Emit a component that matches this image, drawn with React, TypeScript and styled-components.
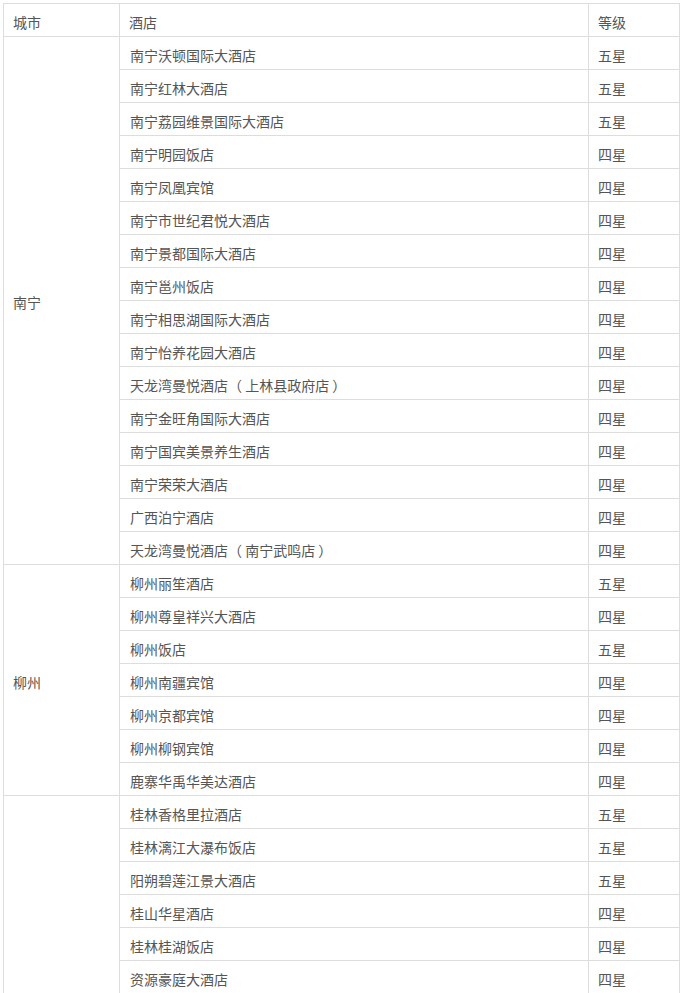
import styled, { createGlobalStyle } from "styled-components";

const GlobalStyle = createGlobalStyle`
  body {
    margin: 0;
    padding: 3px 4px 0 3px;
    background: #ffffff;
    font-family: "Noto Sans CJK SC", "Noto Sans", sans-serif;
  }
`;

const Table = styled.table`
  width: 677px;
  border-collapse: collapse;
  table-layout: fixed;
  font-size: 14px;
  color: #555555;
`;

const Cell = styled.td<{ $width?: number }>`
  border: 1px solid #dddddd;
  height: 33px;
  padding: 3px 10px 0 9px;
  box-sizing: border-box;
  vertical-align: middle;
  line-height: 20px;
  white-space: nowrap;
  ${(p) => (p.$width ? `width: ${p.$width}px;` : "")}
`;

const HeadCell = styled(Cell).attrs({ as: "th" })`
  font-weight: normal;
  text-align: left;
`;

const HotelCell = styled(Cell)`
  padding-left: 10px;
`;

type Group = { city: string; hotels: [string, string][] };

const groups: Group[] = [
  {
    city: "南宁",
    hotels: [
      ["南宁沃顿国际大酒店", "五星"],
      ["南宁红林大酒店", "五星"],
      ["南宁荔园维景国际大酒店", "五星"],
      ["南宁明园饭店", "四星"],
      ["南宁凤凰宾馆", "四星"],
      ["南宁市世纪君悦大酒店", "四星"],
      ["南宁景都国际大酒店", "四星"],
      ["南宁邕州饭店", "四星"],
      ["南宁相思湖国际大酒店", "四星"],
      ["南宁怡养花园大酒店", "四星"],
      ["天龙湾曼悦酒店（ 上林县政府店 ）", "四星"],
      ["南宁金旺角国际大酒店", "四星"],
      ["南宁国宾美景养生酒店", "四星"],
      ["南宁荣荣大酒店", "四星"],
      ["广西泊宁酒店", "四星"],
      ["天龙湾曼悦酒店（ 南宁武鸣店 ）", "四星"],
    ],
  },
  {
    city: "柳州",
    hotels: [
      ["柳州丽笙酒店", "五星"],
      ["柳州尊皇祥兴大酒店", "四星"],
      ["柳州饭店", "五星"],
      ["柳州南疆宾馆", "四星"],
      ["柳州京都宾馆", "四星"],
      ["柳州柳钢宾馆", "四星"],
      ["鹿寨华禹华美达酒店", "四星"],
    ],
  },
  {
    city: "桂林",
    hotels: [
      ["桂林香格里拉酒店", "五星"],
      ["桂林漓江大瀑布饭店", "五星"],
      ["阳朔碧莲江景大酒店", "五星"],
      ["桂山华星酒店", "四星"],
      ["桂林桂湖饭店", "四星"],
      ["资源豪庭大酒店", "四星"],
      ["桂林宾馆", "四星"],
      ["桂林帝苑酒店", "四星"],
      ["桂林大公馆酒店", "四星"],
      ["桂林漓江宾馆", "四星"],
      ["桂林金水湾国际大酒店", "四星"],
      ["桂林国际大酒店", "四星"],
      ["桂林新世纪酒店", "四星"],
      ["桂林宜和酒店", "四星"],
    ],
  },
];

export default function App() {
  return (
    <>
      <GlobalStyle />
      <Table>
        <thead>
          <tr>
            <HeadCell $width={116}>城市</HeadCell>
            <HeadCell $width={469}>酒店</HeadCell>
            <HeadCell>等级</HeadCell>
          </tr>
        </thead>
        <tbody>
          {groups.map((g) =>
            g.hotels.map(([name, level], i) => (
              <tr key={g.city + name}>
                {i === 0 && <Cell rowSpan={g.hotels.length}>{g.city}</Cell>}
                <HotelCell>{name}</HotelCell>
                <Cell>{level}</Cell>
              </tr>
            ))
          )}
        </tbody>
      </Table>
    </>
  );
}
